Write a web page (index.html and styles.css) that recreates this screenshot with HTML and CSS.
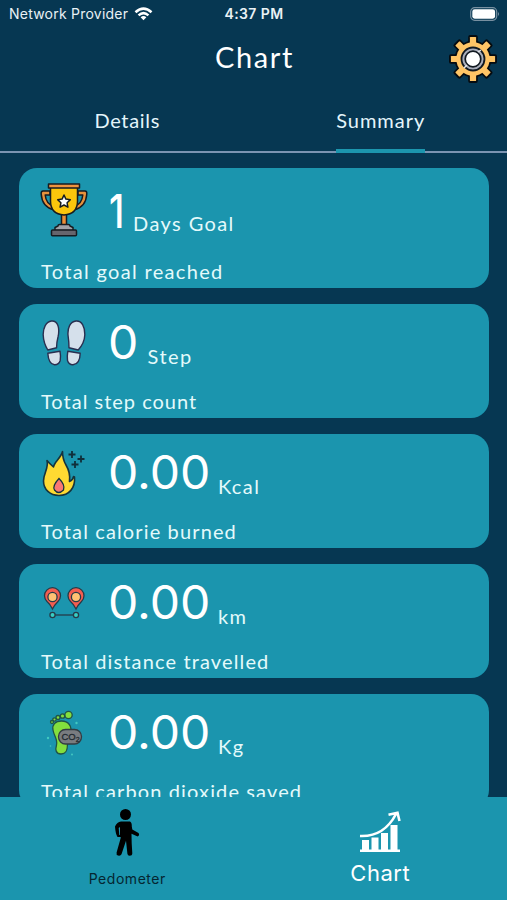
FILE: index.html
```html
<!DOCTYPE html>
<html lang="en">
<head>
<meta charset="utf-8">
<title>Chart</title>
<link rel="stylesheet" href="styles.css">
</head>
<body>
<div class="app">
  <header class="status">
    <span class="carrier">Network Provider
      <svg class="wifi" viewBox="0 0 20 15"><g fill="none" stroke="#fff" stroke-width="2.7"><path d="M1.4 5.6Q10-2.2 18.6 5.6"/><path d="M4.7 9Q10 4.2 15.3 9"/></g><path d="M6.9 11Q10 8.4 13.1 11L10 14.2z" fill="#fff"/></svg>
    </span>
    <span class="time">4:37 PM</span>
    <svg class="battery" viewBox="0 0 30 14"><rect x=".7" y=".7" width="26" height="12.6" rx="4" fill="none" stroke="#7890a1" stroke-width="1.2"/><rect x="2.3" y="2.3" width="22.8" height="9.4" rx="2.4" fill="#fff"/><path d="M28 5q2 2 0 4z" fill="#7890a1"/></svg>
  </header>
  <div class="titlebar">
    <h1>Chart</h1>
    <svg class="gear" viewBox="0 0 48 48">
      <g fill="#050b10">
        <rect x="19.2" y="0" width="9.6" height="48" rx="2"/><rect x="0" y="19.2" width="48" height="9.6" rx="2"/><rect x="19.2" y="0" width="9.6" height="48" rx="2" transform="rotate(45 24 24)"/><rect x="19.2" y="0" width="9.6" height="48" rx="2" transform="rotate(-45 24 24)"/>
        <circle cx="24" cy="24" r="18.5"/>
      </g>
      <g fill="#ffc566"><rect x="20.9" y="1.9" width="6.2" height="44.2" rx=".6"/><rect x="1.9" y="20.9" width="44.2" height="6.2" rx=".6"/><rect x="20.9" y="1.9" width="6.2" height="44.2" rx=".6" transform="rotate(45 24 24)"/><rect x="20.9" y="1.9" width="6.2" height="44.2" rx=".6" transform="rotate(-45 24 24)"/><circle cx="24" cy="24" r="16.7"/></g>
      <circle cx="24" cy="24" r="11.5" fill="#a9adba" stroke="#111820" stroke-width="1.8"/>
      <circle cx="24" cy="24" r="7.8" fill="#fff" stroke="#111820" stroke-width="1.7"/>
      <path d="M29 17l3-2M18 30l-3 3" stroke="#e4e5ea" stroke-width="1.5"/>
    </svg>
  </div>
  <nav class="tabs">
    <span class="tab"><span class="tab-name details">Details</span></span>
    <span class="tab"><span class="tab-name summary active">Summary</span></span>
  </nav>
  <main class="cards">
    <section class="card goal">
      <div class="row">
        <svg class="icon" viewBox="0 0 48 54">
          <g stroke="#171b20" stroke-width="1.5" stroke-linejoin="round">
            <path d="M10 8H3Q1 8 1.2 11Q2 24 14 27V23.5Q6 21 5.2 12H10zM38 8h7q2 0 1.8 3Q46 24 34 27v-3.5Q42 21 42.8 12H38z" fill="#e8913c"/>
            <path d="M21.5 30h5v13h-5z" fill="#ed8d35"/>
            <path d="M10.500 4h27v14q0 13-13.500 14Q10.500 31 10.500 18z" fill="#fbc50c"/>
            <path d="M8.500 1h31v4h-31z" fill="#ee943f"/>
            <path d="M18 43q0-1.500 1.500-1.500h9q1.500 0 1.500 1.500l3 1.500v3H15v-3z" fill="#a2a2a8"/>
            <rect x="11.5" y="47" width="25" height="5.8" rx="1" fill="#66656d"/>
            <path d="M24 12l1.900 4.100 4.400.6-3.200 3.100.8 4.400L24 22l-3.900 2.200.8-4.400-3.200-3.100 4.400-.6z" fill="#fff"/>
          </g>
        </svg>
        <b class="value">1</b><span class="unit">Days Goal</span>
      </div>
      <p class="label">Total goal reached</p>
    </section>
    <section class="card steps">
      <div class="row">
        <svg class="icon" viewBox="0 0 48 54">
          <g stroke="#292f50" stroke-width="1.4" stroke-linejoin="round" fill="#d5e0eb">
            <path d="M10.500 1C5 1.500 2 8 2.200 15Q2.500 23 6.800 30L15.600 27.800Q15.500 23 17 17C19 8 17 .5 10.500 1z"/>
            <path d="M6.800 33.200L19 31.200Q20 37 19.200 40.500Q17.800 45 13.500 44.800Q7.500 44 6.800 33.200z"/>
            <path d="M35 1C29 1.500 26.500 8 27 15Q28 22 28 27.800L37.200 30Q43.500 23 43.800 15C44 7 41 .5 35 1z"/>
            <path d="M26.800 31.200L39.200 33.200Q39 44 32 44.800Q28 45 26.500 40.500Q26 36 26.800 31.200z"/>
          </g>
        </svg>
        <b class="value">0</b><span class="unit">Step</span>
      </div>
      <p class="label">Total step count</p>
    </section>
    <section class="card calories">
      <div class="row">
        <svg class="icon" viewBox="0 0 48 54">
          <path d="M21.500 1.500C20 8 13 12 12.500 17Q9 14 6 10.500C8 18 2.500 23 2.500 31C2.500 39.500 9 45.500 18 45.500C28 45.500 34.500 38 33.500 27L32.500 26.500Q32 30 28.500 31.500C29.500 24 28 20 25 15Q21.500 9 21.500 1.500z" fill="#ffda32" stroke="#16343d" stroke-width="1.6" stroke-linejoin="round"/>
          <path d="M18 28.500Q11 36 13.500 40Q17.500 45 22.500 40Q24.500 35 18 28.500z" fill="#fa7773" stroke="#16343d" stroke-width="1.3"/>
          <path d="M31 1v7M27.500 4.500h7M40 5.500v7M36.500 9h7M34 11v7M30.500 14.500h7" stroke="#102f3a" stroke-width="1.8"/>
        </svg>
        <b class="value">0.00</b><span class="unit">Kcal</span>
      </div>
      <p class="label">Total calorie burned</p>
    </section>
    <section class="card distance">
      <div class="row">
        <svg class="icon" viewBox="0 0 48 54">
          <g stroke="#263b49" stroke-width="1.3">
            <path fill="#f35d50" d="M11.500 29Q9 24 6 21.500A8 8 0 1 1 17 21.500Q13.500 25 11.500 29zM35 29Q32.500 24 29.500 21.500A8 8 0 1 1 40.500 21.500Q37 25 35 29z"/>
            <circle cx="11.5" cy="17" r="4.6" fill="#ffc273"/><circle cx="35" cy="17" r="4.6" fill="#ffc273"/>
            <path d="M14 35h18"/><circle cx="11.5" cy="35" r="2.6" fill="#38cfc4"/><circle cx="35" cy="35" r="2.6" fill="#38cfc4"/>
          </g>
        </svg>
        <b class="value">0.00</b><span class="unit">km</span>
      </div>
      <p class="label">Total distance travelled</p>
    </section>
    <section class="card carbon">
      <div class="row">
        <svg class="icon" viewBox="0 0 48 54">
          <g fill="#83df3e" stroke="#205447" stroke-width="1.3">
            <path d="M20.500 11C14 11 11 15 12 20C13 26 17 30 15.500 35C14 40 15 44 20 44C25.500 44 26.500 40 26.500 34Q27 29 29 24C32 16 27 11 20.500 11z"/>
            <circle cx="27.5" cy="5" r="3.7"/><circle cx="21.5" cy="6" r="2.2"/><circle cx="17" cy="7.5" r="2"/><circle cx="13.5" cy="9.5" r="1.7"/><circle cx="11" cy="12" r="1.5"/>
          </g>
          <rect x="17.5" y="19.5" width="23" height="14.5" rx="7" fill="#797c80" stroke="#333c43" stroke-width="1.3"/>
          <text x="20.5" y="30.3" class="co">CO<tspan font-size="7" dy="1.5">2</tspan></text>
          <g fill="#42c9c1"><circle cx="7" cy="28" r="1.2"/><circle cx="35.5" cy="13" r="1.2"/><circle cx="9.5" cy="36" r=".8"/><circle cx="31" cy="44.5" r="1"/></g>
        </svg>
        <b class="value">0.00</b><span class="unit">Kg</span>
      </div>
      <p class="label">Total carbon dioxide saved</p>
    </section>
  </main>
  <footer class="bottom">
    <div class="item pedometer">
      <svg class="walker" viewBox="0 0 26 48"><circle cx="11.5" cy="5.5" r="5.5"/><path d="M7 12.500h9q2 1 1.800 5l.5 3 6.200 3.500q1.500 2-.8 3.500l-6.200-2.700.2 9.500.6 10q0 2.500-2.700 2.500-2 0-2.200-2l-1.400-13-4.500 13.500q-1 2-3.300 1.300Q2 46 2.600 43.500L6.700 29V28H3.500Q1.500 25 1 17.500 3 13 7 12.500zM4.700 19l.6 7H6V18z" fill-rule="evenodd"/></svg>
      <span>Pedometer</span>
    </div>
    <div class="item chart">
      <svg class="bars" viewBox="0 0 42 42"><path d="M1 38.500h40v2.500H1zM3 29h7v11H3zM12.500 26.500h7V40h-7zM22 22h7v18h-7zM31.500 14h7v26h-7z"/><path d="M1 25Q25 26 37 3M29.500 3.800L38.500 1.800 40.500 10" fill="none" stroke="#fff" stroke-width="2.6"/></svg>
      <span>Chart</span>
    </div>
  </footer>
</div>
</body>
</html>
```
FILE: styles.css
```css
* { box-sizing: border-box; }
body { margin: 0; background: #063752; color: #fff; font-family: Lato, sans-serif; }
.app { width: 507px; height: 900px; display: flex; flex-direction: column; overflow: hidden; }
.status { height: 28px; display: grid; grid-template-columns: 1fr auto 1fr; align-items: center; padding: 0 7px 0 9px; font: 14px/28px Inter, sans-serif; color: #e9f1f5; }
.carrier { display: flex; align-items: center; gap: 6px; letter-spacing: .23px; white-space: nowrap; }
.wifi { width: 19px; height: 14px; margin-top: -1px; }
.time { font-weight: 600; letter-spacing: .4px; margin-left: -1px; }
.battery { width: 30px; height: 14px; justify-self: end; margin-top: -1px; }
.titlebar { height: 66px; display: grid; grid-template-columns: 1fr auto 1fr; flex: none; padding-right: 10px; }
h1 { grid-column: 2; margin: 11px 0 0 12px; font: 400 29px/36px Lato, sans-serif; letter-spacing: 1.6px; }
.gear { width: 48px; height: 48px; justify-self: end; margin-top: 7px; }
.tabs { height: 59px; flex: none; display: grid; grid-template-columns: 1fr 1fr; border-bottom: 2px solid #7b94b2; }
.tab { display: flex; justify-content: center; }
.tab-name { height: 59px; padding-top: 14px; font-size: 20px; line-height: 24px; letter-spacing: 1px; color: #e4f5fb; }
.details { letter-spacing: .7px; padding-left: 1px; }
.summary { margin-left: 1px; }
.active { border-bottom: 4px solid #1c96ae; border-radius: 3px 3px 0 0; }
.cards { height: 644px; flex: none; padding: 15.4px 18.5px 0 19px; display: flex; flex-direction: column; gap: 16px; overflow: hidden; }
.card { height: 114px; flex: none; border-radius: 18px; background: #1b95ae; padding-left: 22px; }
.goal { height: 120px; }
.row { display: flex; align-items: flex-start; height: 84.5px; }
.goal .row { height: 90.4px; }
.icon { width: 48px; height: 54px; margin: 15.6px 0 0; flex: none; }
.goal .icon { margin: 14.6px 1px 0 -1px; }
.value { font: 400 46px/54px Inter, sans-serif; margin: 10.2px 0 0 18.5px; transform: scaleX(1.045); transform-origin: left; }
.goal .value { margin: 16px 0 0 19.5px; font-weight: 500; transform: scaleX(.8); }
.unit { font-size: 20px; line-height: 24px; margin: 39.4px 0 0 12.5px; letter-spacing: 1.4px; color: #e4fafb; }
.steps .unit { margin-left: 11px; letter-spacing: 1.5px; }
.goal .unit { margin: 42.2px 0 0 5.5px; letter-spacing: 1.4px; }
.label { margin: 0; font-size: 20px; line-height: 24px; letter-spacing: 1.13px; color: #e4fafb; white-space: nowrap; }
.goal .label { letter-spacing: 1.33px; }
.steps .label { letter-spacing: 1px; }
.co { font: 9.5px "Liberation Sans", sans-serif; fill: #222a30; stroke: #222a30; stroke-width: .3; }
.bottom { height: 103px; flex: none; background: #1b95ae; display: grid; grid-template-columns: 1fr 1fr; font-family: Inter, sans-serif; }
.item { display: flex; flex-direction: column; align-items: center; }
.pedometer { color: #052631; font-size: 14px; line-height: 20px; letter-spacing: .55px; }
.pedometer span { margin: 12px 0 0 1px; }
.walker { width: 26px; height: 48px; margin-top: 12px; fill: #000; }
.chart { font-size: 22px; line-height: 28px; letter-spacing: .5px; }
.bars { width: 42px; height: 42px; margin-top: 14px; fill: #fff; }
.chart span { margin-top: 6px; }
```
